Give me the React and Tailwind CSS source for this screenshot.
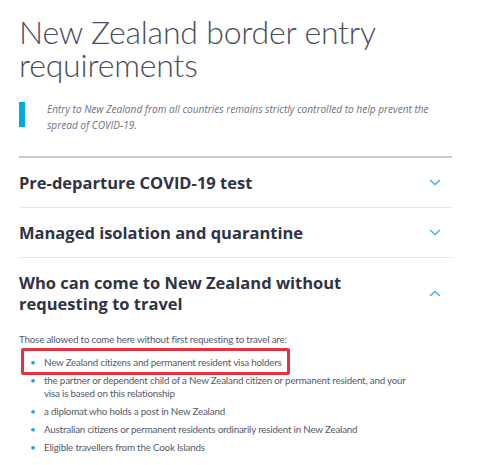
const sections = [
  { title: 'Pre-departure COVID-19 test', open: false },
  { title: 'Managed isolation and quarantine', open: false },
  { title: 'Who can come to New Zealand without requesting to travel', open: true },
];

const allowed = [
  'New Zealand citizens and permanent resident visa holders',
  'the partner or dependent child of a New Zealand citizen or permanent resident, and your visa is based on this relationship',
  'a diplomat who holds a post in New Zealand',
  'Australian citizens or permanent residents ordinarily resident in New Zealand',
  'Eligible travellers from the Cook Islands',
];

function Chevron({ up }) {
  return (
    <svg width="12" height="7" viewBox="0 0 12 7" className="shrink-0 text-[#3db3e8]">
      <path
        d={up ? 'M1 6 L6 1.5 L11 6' : 'M1 1 L6 5.5 L11 1'}
        fill="none"
        stroke="currentColor"
        strokeWidth="1.5"
      />
    </svg>
  );
}

export default function App() {
  return (
    <div className="min-h-[465px] w-[500px] bg-white pl-[19px] pr-[48px] pt-[15px] font-['Open_Sans',sans-serif] overflow-hidden">
      <h1 className="font-['Lato',sans-serif] text-[32px] leading-[33px] tracking-[-0.2px] font-light text-[#4a4e5c]">
        New Zealand border entry requirements
      </h1>

      {/* Intro */}
      <div className="mt-[20px] flex items-start gap-[22px]">
        <div className="mt-[1px] h-[25px] w-[6px] shrink-0 bg-[#00a9e0]" />
        <p className="text-[10.1px] leading-[16px] italic text-[#6e7280]">
          Entry to New Zealand from all countries remains strictly controlled to help prevent the spread of COVID-19.
        </p>
      </div>

      {/* Accordion */}
      <div className="mt-[23px] border-t-2 border-[#c9c9ce]">
        {sections.map((s, i) => (
          <div key={s.title} className={i < sections.length - 1 ? 'border-b border-[#e6e6e8]' : ''}>
            <div className="flex items-center justify-between py-[14px] pr-[11px]">
              <h2 className="max-w-[340px] text-[16.5px] leading-[21px] font-bold text-[#2f3343]">{s.title}</h2>
              <Chevron up={s.open} />
            </div>
          </div>
        ))}
        <div className="pt-[5px] font-['Lato',sans-serif] text-[9.8px] tracking-[-0.2px] leading-[13px] text-[#555a68]">
          <p>Those allowed to come here without first requesting to travel are:</p>
          <ul className="mt-[10px] flex flex-col gap-[5px]">
            {allowed.map((item, i) => (
              <li key={i} className="relative flex pr-[30px]">
                <span className="w-[25px] shrink-0 pl-[11px] text-[#1ba4e0]">•</span>
                <span>{item}</span>
                {i === 0 && (
                  <span className="absolute -top-[8px] left-[2px] h-[27px] w-[269px] rounded-[2px] border-[3px] border-[#e8323f]" />
                )}
              </li>
            ))}
          </ul>
        </div>
      </div>
    </div>
  );
}
